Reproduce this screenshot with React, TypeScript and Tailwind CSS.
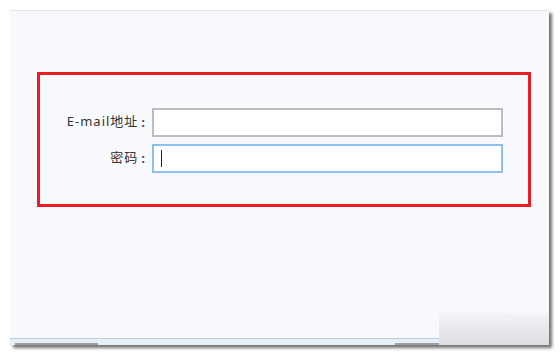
import React from "react";

const font = { fontFamily: '"Noto Sans", "Noto Sans CJK SC", sans-serif' };

function Field({ label, focused }: { label: string; focused?: boolean }) {
  return (
    <div className="flex items-center">
      <label className="flex w-[112px] items-center justify-end pr-[6px] text-[13px] tracking-[1px] text-[#333]">
        <span className="-mt-[2px]">{label}</span>
        <span className="pl-[3px] font-bold text-[#3a4a6a]">:</span>
      </label>
      <div className="relative">
        <input
          readOnly
          className={
            "block h-[29px] w-[351px] bg-white outline-none " +
            (focused ? "border-2 border-[#8cc0ef]" : "border-2 border-[#bdbdbd]")
          }
        />
        {focused ? <span className="absolute left-[9px] top-[6px] h-[17px] w-px bg-[#222]" /> : null}
      </div>
    </div>
  );
}

export default function App() {
  return (
    <div className="h-[356px] w-[560px] bg-white pl-[10px] pt-[10px]" style={font}>
      <div className="flex h-[335px] w-[539px] flex-col border-t border-[#e2e3e6] bg-[#f8f9fd] shadow-[3px_3px_3px_rgba(0,0,0,0.55)]">
        <div className="flex-1 pl-[27px] pt-[61px]">
          <div className="flex h-[135px] w-[494px] flex-col gap-[7px] border-[3px] border-[#ec1c24] pt-[33px]">
            <Field label="E-mail地址" />
            <Field label="密码" focused />
          </div>
        </div>
        <div className="flex h-[32px] items-end">
          <div className="flex h-[7px] flex-1 flex-col border-t border-[#c5ccd3] bg-[#e6eff8]">
            <div className="mt-auto flex h-[2px]">
              <div className="ml-[5px] w-[83px] bg-[#9aa1a8]" />
              <div className="ml-auto w-[44px] bg-[#9aa1a8]" />
            </div>
          </div>
          <div className="h-[32px] w-[110px] bg-gradient-to-b from-[#f3f4f7] to-[#dcdee2]" />
        </div>
      </div>
    </div>
  );
}
